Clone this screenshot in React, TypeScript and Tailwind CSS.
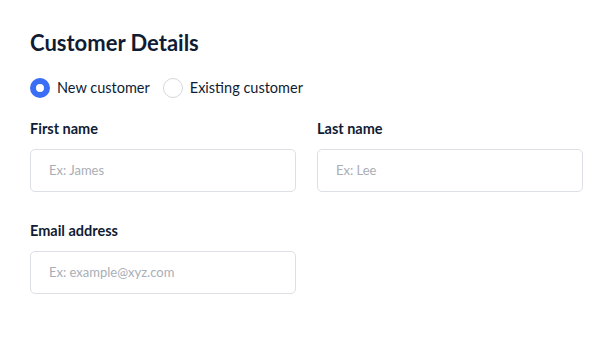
import React from 'react';

const Field = ({ label, placeholder }: { label: string; placeholder: string }) => (
  <div className="flex flex-col w-[266px]">
    <label className="text-[14.5px] font-bold text-[#101c33] leading-5">{label}</label>
    <input
      placeholder={placeholder}
      className="mt-[10px] h-[43px] rounded-[5px] border border-[#dcdfe4] bg-white px-[18px] text-[13px] text-[#101c33] placeholder:text-[#a9aeb6] outline-none"
    />
  </div>
);

export default function App() {
  return (
    <div className="w-[616px] h-[338px] bg-white pl-[30px] pt-[27px]" style={{ fontFamily: 'Lato, "Open Sans", sans-serif' }}>
      <h1 className="text-[22px] font-bold text-[#101c33] leading-8">Customer Details</h1>

      {/* Customer type */}
      <div className="mt-[18px] flex items-center text-[14.5px] text-[#101c33]">
        <label className="flex items-center gap-[7px]">
          <span className="w-[20px] h-[20px] rounded-full border-[6px] border-[#3a6ef4] bg-white" />
          New customer
        </label>
        <label className="ml-[13px] flex items-center gap-[7px]">
          <span className="w-[20px] h-[20px] rounded-full border border-[#d5d8dd] bg-white" />
          Existing customer
        </label>
      </div>

      <div className="mt-[20px] flex gap-[21px]">
        <Field label="First name" placeholder="Ex: James" />
        <Field label="Last name" placeholder="Ex: Lee" />
      </div>

      <div className="mt-[29px]">
        <Field label="Email address" placeholder="Ex: example@xyz.com" />
      </div>
    </div>
  );
}
